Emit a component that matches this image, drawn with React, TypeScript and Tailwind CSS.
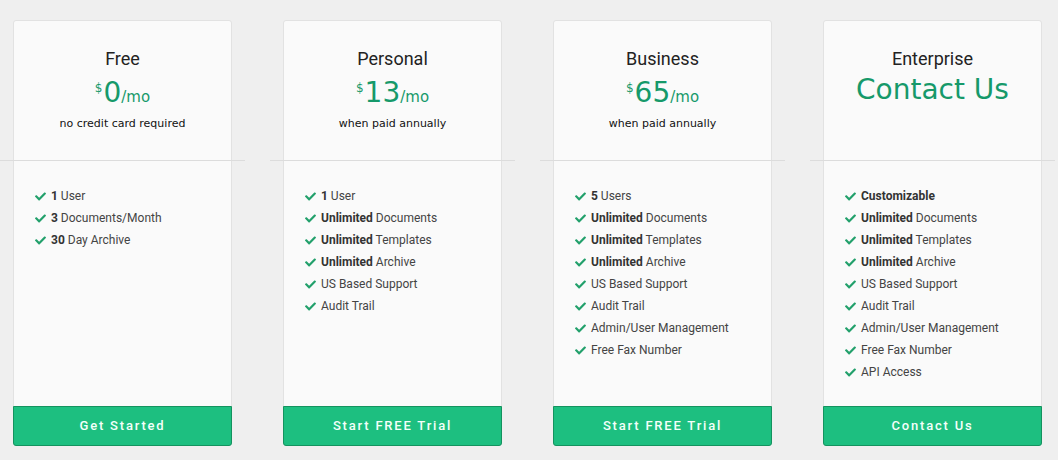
const plans = [
  {
    name: "Free",
    price: "0",
    note: "no credit card required",
    button: "Get Started",
    features: [
      ["1", " User"],
      ["3", " Documents/Month"],
      ["30", " Day Archive"],
    ],
  },
  {
    name: "Personal",
    price: "13",
    note: "when paid annually",
    button: "Start FREE Trial",
    features: [
      ["1", " User"],
      ["Unlimited", " Documents"],
      ["Unlimited", " Templates"],
      ["Unlimited", " Archive"],
      ["", "US Based Support"],
      ["", "Audit Trail"],
    ],
  },
  {
    name: "Business",
    price: "65",
    note: "when paid annually",
    button: "Start FREE Trial",
    features: [
      ["5", " Users"],
      ["Unlimited", " Documents"],
      ["Unlimited", " Templates"],
      ["Unlimited", " Archive"],
      ["", "US Based Support"],
      ["", "Audit Trail"],
      ["", "Admin/User Management"],
      ["", "Free Fax Number"],
    ],
  },
  {
    name: "Enterprise",
    price: "",
    note: "",
    button: "Contact Us",
    features: [
      ["Customizable", ""],
      ["Unlimited", " Documents"],
      ["Unlimited", " Templates"],
      ["Unlimited", " Archive"],
      ["", "US Based Support"],
      ["", "Audit Trail"],
      ["", "Admin/User Management"],
      ["", "Free Fax Number"],
      ["", "API Access"],
    ],
  },
]

const Check = () => (
  <svg viewBox="0 0 512 512" className="w-[11px] h-[11px] shrink-0 fill-[#22a06b]">
    <path d="M173.9 439.4l-166.4-166.4c-10-10-10-26.2 0-36.2l36.2-36.2c10-10 26.2-10 36.2 0L192 312.7 432.1 72.6c10-10 26.2-10 36.2 0l36.2 36.2c10 10 10 26.2 0 36.2L210.1 439.4c-10 10-26.2 10-36.2 0z" />
  </svg>
)

const App = () => {
  return (
    <main className="w-[1058px] h-[460px] bg-[#efefef] overflow-hidden">
      <div className="flex gap-[51px] pl-[13px] pt-[20px]">
        {plans.map((plan) => (
          <div
            key={plan.name}
            className="w-[219px] h-[426px] flex flex-col bg-[#fafafa] border border-[#e2e2e2] rounded-[3px]"
          >
            <div className="h-[139px] flex flex-col items-center pt-[27px]">
              <h3 className="text-[18px] leading-[22px] text-[#222] font-['Roboto',sans-serif]">
                {plan.name}
              </h3>
              {plan.price ? (
                <>
                  <div className="flex items-baseline text-[#16996a] font-['DejaVu_Sans',sans-serif] mt-[5px] h-[36px]">
                    <span className="text-[12px] self-start mt-[4px] mr-[1px]">$</span>
                    <span className="text-[28px] leading-[36px]">{plan.price}</span>
                    <span className="text-[15px]">/mo</span>
                  </div>
                  <p className="text-[11px] leading-[14px] mt-[6px] text-[#111] font-['DejaVu_Sans',sans-serif]">
                    {plan.note}
                  </p>
                </>
              ) : (
                <div className="text-[28px] leading-[36px] mt-[2px] text-[#16996a] font-['DejaVu_Sans',sans-serif]">
                  Contact Us
                </div>
              )}
            </div>
            <div className="h-px bg-[#dcdcdc] -mx-[14px]" />
            <ul className="flex-1 pt-[24px] pl-[21px] font-['Roboto',sans-serif] text-[12px] text-[#444]">
              {plan.features.map(([bold, rest], i) => (
                <li key={i} className="flex items-center gap-[5px] h-[22px]">
                  <Check />
                  <span>
                    {bold && <b className="font-bold text-[#333]">{bold}</b>}
                    {rest}
                  </span>
                </li>
              ))}
            </ul>
            <button className="h-[40px] -mx-px -mb-px bg-[#1dbf80] border border-[#14935f] rounded-b-[3px] text-[#f4fffa] text-[13px] font-medium tracking-[1.8px] font-['Roboto',sans-serif]">
              {plan.button}
            </button>
          </div>
        ))}
      </div>
    </main>
  )
}

export default App
